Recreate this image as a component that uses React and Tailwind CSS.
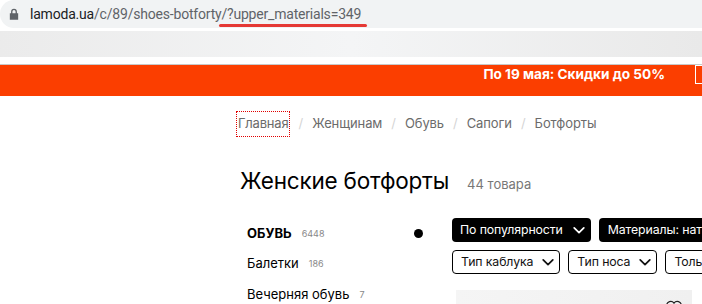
import React from 'react';

const Chevron = ({ className = '' }) => (
  <svg viewBox="0 0 16 16" className={className} fill="none" stroke="currentColor" strokeWidth="2" strokeLinecap="round" strokeLinejoin="round">
    <path d="M2.5 5.5l5.5 5.5 5.5-5.5" />
  </svg>
);

const crumbs = ['Женщинам', 'Обувь', 'Сапоги', 'Ботфорты'];

const categories = [
  { name: 'ОБУВЬ', count: '6448', bold: true },
  { name: 'Балетки', count: '186' },
  { name: 'Вечерняя обувь', count: '7' },
];

export default function App() {
  return (
    <div className="w-[702px] h-[304px] overflow-hidden bg-white relative font-['Roboto',sans-serif]">
      {/* address bar */}
      <div className="h-[28px] bg-[#f1f3f4] rounded-l-[14px] flex items-center pl-[9px]">
        <svg viewBox="0 0 12 14" className="w-[10px] h-[12px] text-[#5f6368] shrink-0" fill="currentColor">
          <path d="M2.5 6V4.2a3.5 3.5 0 0 1 7 0V6H11v8H1V6h1.5zm1.6 0h3.8V4.2a1.9 1.9 0 0 0-3.8 0V6z" />
        </svg>
        <div className="ml-[11px] text-[14px] leading-none text-[#5f6368] relative font-['Roboto',sans-serif] whitespace-nowrap tracking-[-0.2px]">
          <span className="text-[#202124]">lamoda.ua</span>/c/89/shoes-botforty
          <span className="relative">
            /?upper_materials=349
            <span className="absolute left-[-2px] right-[-6px] bottom-[-5px] h-[3px] rounded-full bg-[#e53935]" />
          </span>
        </div>
      </div>
      {/* blurred strip */}
      <div className="mt-[3px] h-[26px] bg-gradient-to-r from-[#ebebeb] via-[#f4f5f6] to-[#e9e9e9]" />
      <div className="mt-[7px] h-px bg-[#c8c8c8]" />
      {/* promo bar */}
      <div className="h-[31px] bg-[#fb3e00] relative flex justify-end">
        <div className="mr-[37px] mt-[-1px] text-white font-bold text-[13.6px] font-['Inter',sans-serif]">
          По 19 мая: Скидки до 50%
        </div>
        <div className="absolute left-[695px] top-0 w-[20px] h-[19px] border border-white" />
      </div>

      {/* breadcrumbs */}
      <div className="ml-[237px] mt-[16px] flex items-center text-[13px] text-[#6b6b6b] font-['Inter',sans-serif]">
        <span className="px-px py-[2px] outline-[1.5px] outline-dotted outline-[#e00000] tracking-[-0.2px]">Главная</span>
        {crumbs.map((c) => (
          <React.Fragment key={c}>
            <span className="mx-[9px] text-[#d5d5d5]">/</span>
            <span className="tracking-[-0.1px]">{c}</span>
          </React.Fragment>
        ))}
      </div>

      {/* heading */}
      <div className="ml-[240px] mt-[34px] flex items-baseline font-['Inter',sans-serif]">
        <h1 className="text-[22.5px] leading-none text-black tracking-[-0.2px]">Женские ботфорты</h1>
        <span className="ml-[18px] text-[13px] text-[#777]">44 товара</span>
      </div>

      {/* body */}
      <div className="ml-[247px] mt-[24px] flex font-['Inter',sans-serif]">
        <div className="w-[205px] shrink-0 relative">
          {categories.map((c) => (
            <div key={c.name} className="h-[30.5px] flex items-center whitespace-nowrap">
              <span className={`text-[13px] text-black ${c.bold ? 'font-bold' : ''}`}>{c.name}</span>
              <span className="ml-[10px] text-[9px] text-[#888]">{c.count}</span>
            </div>
          ))}
          <div className="absolute left-[167px] top-[11px] w-[9px] h-[9px] rounded-full bg-black" />
        </div>
        <div className="flex flex-col shrink-0 text-[12.3px] tracking-[-0.1px]">
          <div className="flex gap-[8px]">
            <button className="h-[24px] pl-[8px] pr-[5px] rounded-[4px] bg-black text-white flex items-center gap-[9px] whitespace-nowrap">
              По популярности <Chevron className="w-[14px] h-[14px]" />
            </button>
            <button className="h-[24px] px-[9px] rounded-[4px] bg-black text-white flex items-center whitespace-nowrap">
              Материалы: натуральная кожа
            </button>
          </div>
          <div className="flex gap-[8px] mt-[8px]">
            {['Тип каблука', 'Тип носа', 'Только со скидкой'].map((t) => (
              <button key={t} className="h-[24px] pl-[8px] pr-[4px] rounded-[4px] border border-black text-[#111] flex items-center gap-[8px] whitespace-nowrap">
                {t} <Chevron className="w-[14px] h-[14px]" />
              </button>
            ))}
          </div>
          <div className="mt-[16px] ml-[4px] w-[236px] h-[40px] bg-gradient-to-r from-[#f5f5f5] to-[#f0f0f0] relative">
            <svg viewBox="0 0 24 22" className="absolute right-[8px] top-[9px] w-[20px] h-[18px]" fill="none" stroke="#222" strokeWidth="1.5">
              <path d="M12 20s-9-5.5-9-12a5 5 0 0 1 9-3 5 5 0 0 1 9 3c0 6.5-9 12-9 12z" />
            </svg>
          </div>
        </div>
      </div>
    </div>
  );
}
